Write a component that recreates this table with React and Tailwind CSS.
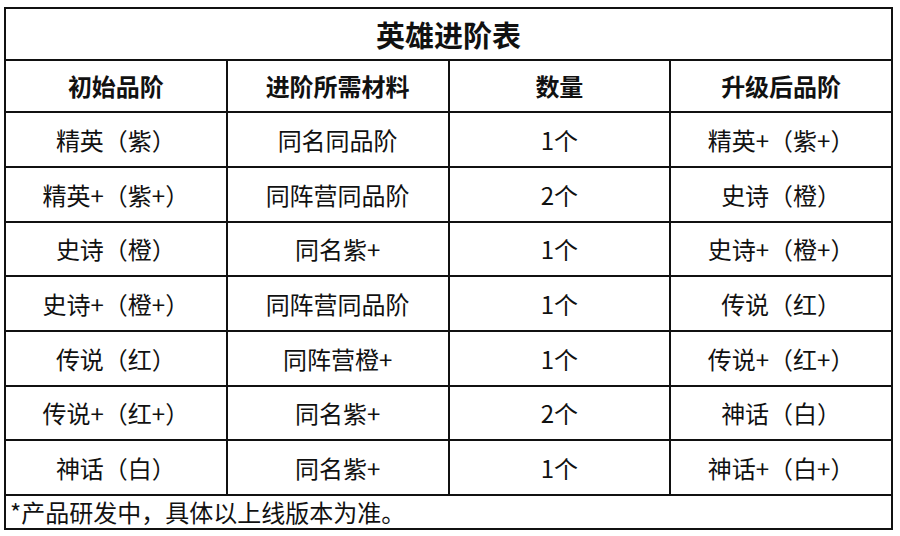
const rows = [
  ["精英（紫）", "同名同品阶", "1个", "精英+（紫+）"],
  ["精英+（紫+）", "同阵营同品阶", "2个", "史诗（橙）"],
  ["史诗（橙）", "同名紫+", "1个", "史诗+（橙+）"],
  ["史诗+（橙+）", "同阵营同品阶", "1个", "传说（红）"],
  ["传说（红）", "同阵营橙+", "1个", "传说+（红+）"],
  ["传说+（红+）", "同名紫+", "2个", "神话（白）"],
  ["神话（白）", "同名紫+", "1个", "神话+（白+）"],
];

const heads = ["初始品阶", "进阶所需材料", "数量", "升级后品阶"];

export default function App() {
  return (
    <div
      className="w-[900px] h-[536px] bg-white pl-[4px] pt-[7px] text-[#111]"
      style={{ fontFamily: '"Noto Sans CJK SC", "Noto Sans", sans-serif' }}
    >
      <table className="w-[889px] table-fixed border-collapse">
        <tbody>
          <tr className="h-[52px]">
            <td colSpan={4} className="border-2 border-[#111] text-center text-[29px] font-bold leading-none">
              英雄进阶表
            </td>
          </tr>
          <tr className="h-[52px]">
            {heads.map((h) => (
              <td key={h} className="border-2 border-[#111] text-center text-[24px] font-bold leading-none">
                {h}
              </td>
            ))}
          </tr>
          {rows.map((r, i) => (
            <tr key={i} className={i % 3 === 2 ? "h-[54px]" : "h-[55px]"}>
              {r.map((c, j) => (
                <td key={j} className="border-2 border-[#111] text-center text-[24px] leading-none">
                  {c.replace(/\+/g, "+ ").replace(/\+ （/g, "+（").replace(/\+ ）/g, "+）")}
                </td>
              ))}
            </tr>
          ))}
          <tr className="h-[34px]">
            <td colSpan={4} className="border-2 border-[#111] pl-[4px] text-left text-[24px] leading-none">
              *产品研发中，具体以上线版本为准。
            </td>
          </tr>
        </tbody>
      </table>
    </div>
  );
}
